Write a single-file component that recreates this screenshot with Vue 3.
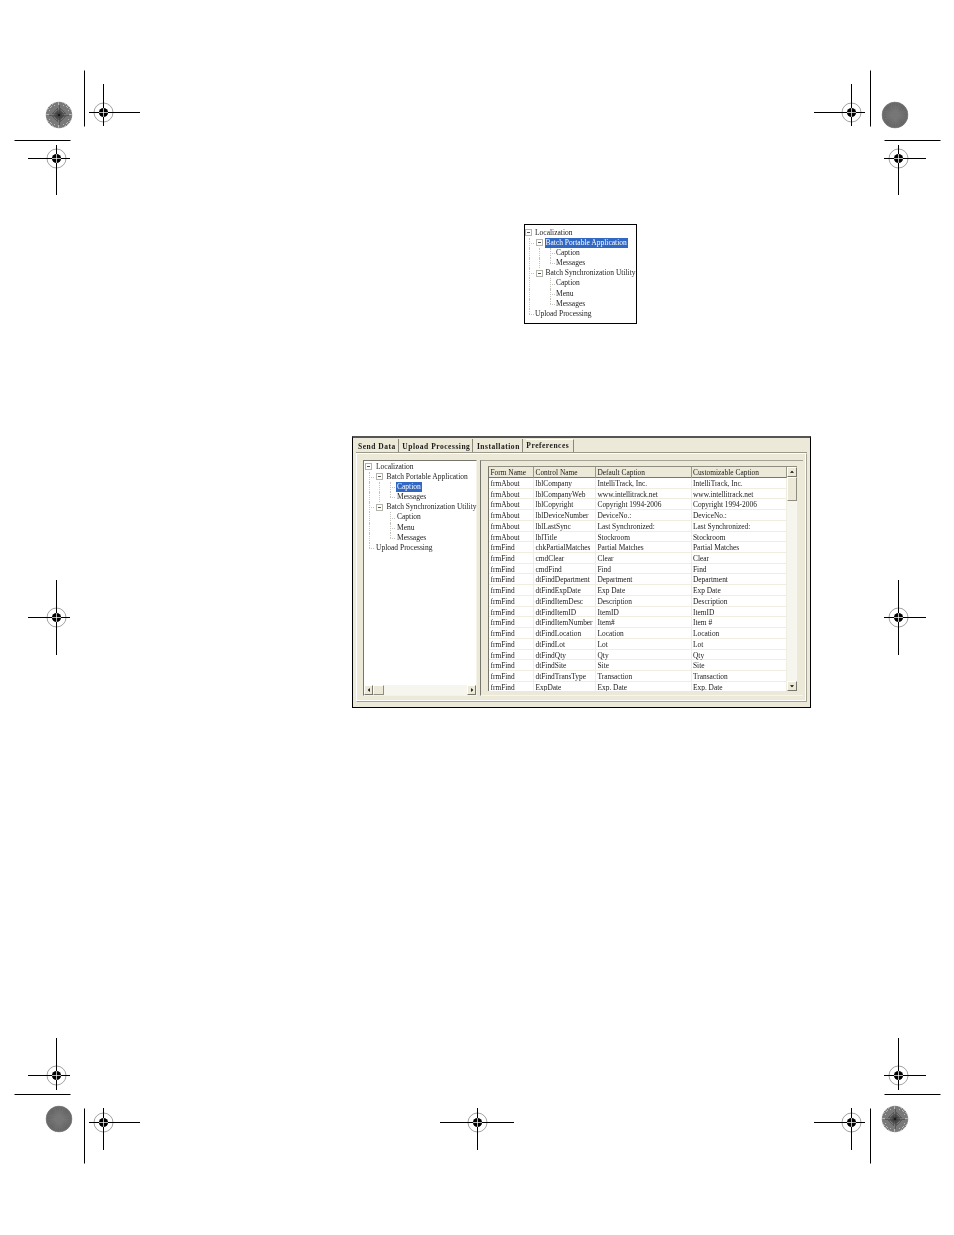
<script setup>
const treeRows = [
  { label: 'Localization', cells: ['box'] },
  { label: 'Batch Portable Application', cells: ['tee', 'box'], selectedIn: 'small' },
  { label: 'Caption', cells: ['v', 'v', 'tee'], selectedIn: 'large' },
  { label: 'Messages', cells: ['v', 'v', 'elbow'] },
  { label: 'Batch Synchronization Utility', cells: ['tee', 'box'] },
  { label: 'Caption', cells: ['v', 'blank', 'tee'] },
  { label: 'Menu', cells: ['v', 'blank', 'tee'] },
  { label: 'Messages', cells: ['v', 'blank', 'elbow'] },
  { label: 'Upload Processing', cells: ['elbow'] }
]

const tabs = [
  { label: 'Send Data' },
  { label: 'Upload Processing' },
  { label: 'Installation' },
  { label: 'Preferences', active: true }
]

const columns = ['Form Name', 'Control Name', 'Default Caption', 'Customizable Caption']

const rows = [
  ['frmAbout', 'lblCompany', 'IntelliTrack, Inc.', 'IntelliTrack, Inc.'],
  ['frmAbout', 'lblCompanyWeb', 'www.intellitrack.net', 'www.intellitrack.net'],
  ['frmAbout', 'lblCopyright', 'Copyright 1994-2006', 'Copyright 1994-2006'],
  ['frmAbout', 'lblDeviceNumber', 'DeviceNo.:', 'DeviceNo.:'],
  ['frmAbout', 'lblLastSync', 'Last Synchronized:', 'Last Synchronized:'],
  ['frmAbout', 'lblTitle', 'Stockroom', 'Stockroom'],
  ['frmFind', 'chkPartialMatches', 'Partial Matches', 'Partial Matches'],
  ['frmFind', 'cmdClear', 'Clear', 'Clear'],
  ['frmFind', 'cmdFind', 'Find', 'Find'],
  ['frmFind', 'dtFindDepartment', 'Department', 'Department'],
  ['frmFind', 'dtFindExpDate', 'Exp Date', 'Exp Date'],
  ['frmFind', 'dtFindItemDesc', 'Description', 'Description'],
  ['frmFind', 'dtFindItemID', 'ItemID', 'ItemID'],
  ['frmFind', 'dtFindItemNumber', 'Item#', 'Item #'],
  ['frmFind', 'dtFindLocation', 'Location', 'Location'],
  ['frmFind', 'dtFindLot', 'Lot', 'Lot'],
  ['frmFind', 'dtFindQty', 'Qty', 'Qty'],
  ['frmFind', 'dtFindSite', 'Site', 'Site'],
  ['frmFind', 'dtFindTransType', 'Transaction', 'Transaction'],
  ['frmFind', 'ExpDate', 'Exp. Date', 'Exp. Date']
]

// registration targets: centre plus the reach of each arm
const targets = [
  { x: 103, y: 112, l: 14, r: 37, t: 28, b: 14 },
  { x: 851, y: 112, l: 37, r: 14, t: 28, b: 14 },
  { x: 56, y: 158, l: 28, r: 14, t: 13, b: 37 },
  { x: 898, y: 158, l: 14, r: 28, t: 13, b: 37 },
  { x: 56, y: 617, l: 28, r: 14, t: 37, b: 38 },
  { x: 898, y: 617, l: 14, r: 28, t: 37, b: 38 },
  { x: 56, y: 1075, l: 28, r: 14, t: 37, b: 15 },
  { x: 898, y: 1075, l: 14, r: 28, t: 37, b: 15 },
  { x: 103, y: 1122, l: 14, r: 37, t: 14, b: 28 },
  { x: 477, y: 1122, l: 37, r: 37, t: 14, b: 28 },
  { x: 851, y: 1122, l: 37, r: 14, t: 14, b: 28 }
]

const cropLines = [
  [84, 70, 84, 126],
  [870, 70, 870, 126],
  [14, 140, 70, 140],
  [884, 140, 940, 140],
  [14, 1094, 70, 1094],
  [884, 1094, 940, 1094],
  [84, 1108, 84, 1163],
  [870, 1108, 870, 1163]
]

function rayPath(cx, cy, radius, count) {
  let d = ''
  for (let i = 0; i < count; i++) {
    const a = (i / count) * Math.PI * 2
    const x = (cx + Math.cos(a) * radius).toFixed(2)
    const y = (cy + Math.sin(a) * radius).toFixed(2)
    d += `M${cx} ${cy}L${x} ${y}`
  }
  return d
}

const bursts = [
  { x: 59, y: 115, rays: rayPath(59, 115, 13, 64), kind: 'open' },
  { x: 895, y: 1119, rays: rayPath(895, 1119, 13, 64), kind: 'open' },
  { x: 895, y: 115, rays: rayPath(895, 115, 13, 180), kind: 'dense' },
  { x: 59, y: 1119, rays: rayPath(59, 1119, 13, 180), kind: 'dense' }
]
</script>

<template>
  <div class="page">
    <svg class="marks" width="954" height="1235" viewBox="0 0 954 1235">
      <g v-for="(b, i) in bursts" :key="'b' + i">
        <circle :cx="b.x" :cy="b.y" r="13" :class="b.kind === 'open' ? 'disc-open' : 'disc-dense'" />
        <path :d="b.rays" :class="b.kind === 'open' ? 'rays-open' : 'rays-dense'" />
        <circle :cx="b.x" :cy="b.y" r="13" class="burst-edge" />
        <circle v-if="b.kind === 'open'" :cx="b.x" :cy="b.y" r="1" class="hub" />
      </g>
      <line v-for="(c, i) in cropLines" :key="'c' + i" :x1="c[0] + 0.5" :y1="c[1] + 0.5" :x2="c[2] + 0.5" :y2="c[3] + 0.5" class="crop" />
      <g v-for="(t, i) in targets" :key="'t' + i">
        <circle :cx="t.x + 0.5" :cy="t.y + 0.5" r="9.5" class="ring" />
        <line :x1="t.x - t.l" :y1="t.y + 0.5" :x2="t.x + t.r" :y2="t.y + 0.5" class="crop" />
        <line :x1="t.x + 0.5" :y1="t.y - t.t" :x2="t.x + 0.5" :y2="t.y + t.b" class="crop" />
        <circle :cx="t.x + 0.5" :cy="t.y + 0.5" r="4.6" class="dot" />
        <line :x1="t.x - 4" :y1="t.y + 0.5" :x2="t.x + 5" :y2="t.y + 0.5" class="knock" />
        <line :x1="t.x + 0.5" :y1="t.y - 4" :x2="t.x + 0.5" :y2="t.y + 5" class="knock" />
      </g>
    </svg>

    <section class="small-tree">
      <div v-for="(row, i) in treeRows" :key="i" class="tree-row">
        <span v-for="(cell, j) in row.cells" :key="j" class="cell" :class="cell"></span>
        <span class="tree-label" :class="{ selected: row.selectedIn === 'small' }">{{ row.label }}</span>
      </div>
    </section>

    <section class="window">
      <div class="tabs">
        <span v-for="tab in tabs" :key="tab.label" class="tab" :class="{ active: tab.active }">{{ tab.label }}</span>
      </div>
      <div class="tab-frame">
        <div class="tree-pane">
          <div class="tree-scroll">
            <div v-for="(row, i) in treeRows" :key="i" class="tree-row">
              <span v-for="(cell, j) in row.cells" :key="j" class="cell" :class="cell"></span>
              <span class="tree-label" :class="{ selected: row.selectedIn === 'large' }">{{ row.label }}</span>
            </div>
          </div>
          <div class="hbar">
            <span class="sb-btn"><i class="arrow left"></i></span>
            <span class="sb-thumb-h"></span>
            <span class="sb-track"></span>
            <span class="sb-btn"><i class="arrow right"></i></span>
          </div>
        </div>
        <div class="grid-pane">
          <div class="grid">
            <div class="grid-body">
              <div class="grid-row head">
                <span v-for="c in columns" :key="c" class="grid-cell">{{ c }}</span>
              </div>
              <div v-for="(r, i) in rows" :key="i" class="grid-row">
                <span v-for="(c, j) in r" :key="j" class="grid-cell">{{ c }}</span>
              </div>
            </div>
            <div class="vbar">
              <span class="sb-btn tall"><i class="arrow up"></i></span>
              <span class="sb-thumb-v"></span>
              <span class="sb-track"></span>
              <span class="sb-btn tall"><i class="arrow down"></i></span>
            </div>
          </div>
        </div>
      </div>
    </section>
  </div>
</template>

<style scoped>
.page {
  position: relative;
  width: 954px;
  height: 1235px;
  background: #fff;
  overflow: hidden;
  padding-top: 224px;
  box-sizing: border-box;
  font-family: "Liberation Serif", serif;
  font-size: 7.4px;
  color: #1a1a1a;
}
.marks {
  position: absolute;
  left: 0;
  top: 0;
}
.crop {
  stroke: #000;
  stroke-width: 1;
}
.knock {
  stroke: #fff;
  stroke-width: 0.7;
}
.ring {
  fill: #fff;
  stroke: #8a8a8a;
  stroke-width: 0.8;
}
.dot {
  fill: #000;
}
.disc-open {
  fill: #b8b8b8;
}
.disc-dense {
  fill: #4c4c4c;
}
.rays-open {
  stroke: #3a3a3a;
  stroke-width: 0.5;
  fill: none;
  shape-rendering: crispEdges;
}
.rays-dense {
  stroke: #787878;
  stroke-width: 0.4;
  fill: none;
  shape-rendering: crispEdges;
}
.burst-edge {
  fill: none;
  stroke: #8a8a8a;
  stroke-width: 0.5;
}
.hub {
  fill: #111;
}

.small-tree {
  position: relative;
  width: 113px;
  height: 100px;
  margin-left: 524px;
  border: 1px solid #000;
  box-sizing: border-box;
  padding-top: 2.5px;
  background: #fff;
  filter: blur(0.3px);
}
.tree-row {
  display: flex;
  align-items: center;
  height: 10.2px;
  line-height: 10.2px;
  white-space: nowrap;
}
.cell {
  position: relative;
  flex: none;
  width: 10.5px;
  height: 100%;
}
.cell.v::before,
.cell.tee::before,
.cell.elbow::before {
  content: "";
  position: absolute;
  left: 3.5px;
  top: 0;
  bottom: 0;
  border-left: 1px dotted #c4c4be;
}
.cell.elbow::before {
  bottom: 50%;
}
.cell.tee::after,
.cell.elbow::after {
  content: "";
  position: absolute;
  left: 4px;
  width: 5px;
  top: 50%;
  border-top: 1px dotted #c4c4be;
}
.cell.box::before {
  content: "";
  position: absolute;
  left: 0;
  top: 1.6px;
  width: 7px;
  height: 7px;
  box-sizing: border-box;
  border: 1px solid #b4b4ac;
  background: #fff;
}
.cell.box::after {
  content: "";
  position: absolute;
  left: 2px;
  top: 4.6px;
  width: 3px;
  height: 1px;
  background: #555;
}
.tree-label {
  font-size: 7.5px;
  margin-left: -1.5px;
  padding: 0 1px;
}
.tree-scroll .tree-label {
  margin-left: -0.5px;
}
.tree-label.selected {
  background: #3168c4;
  color: #fff;
}

.window {
  position: relative;
  width: 459px;
  height: 272px;
  margin: 112px 0 0 352px;
  box-sizing: border-box;
  border: 1px solid #000;
  border-top: 2px solid #555;
  background: #ece9d8;
  display: flex;
  flex-direction: column;
  padding: 1px 3px 5px 3px;
  filter: blur(0.3px);
}
.tabs {
  display: flex;
  height: 14px;
  flex: none;
  padding-left: 2px;
}
.tab {
  font-weight: bold;
  font-size: 7.5px;
  line-height: 15px;
  padding: 0 2px 0 0;
  border-right: 1px solid #8a887a;
  margin-right: 3.5px;
  letter-spacing: 0.52px;
}
.tab.active {
  line-height: 12px;
  padding: 0 4px 0 0;
  background: #ece9d8;
  border-top: 1px solid #fff;
}
.tab-frame {
  flex: 1;
  min-height: 0;
  display: flex;
  gap: 3px;
  border: 1px solid #a5a396;
  border-top-color: #fff;
  border-left-color: #fff;
  box-shadow: inset -1px -1px 0 #fff, 0 -1px 0 #9a9888;
  padding: 6px 3px 5px 6px;
}
.tree-pane {
  width: 114px;
  flex: none;
  display: flex;
  flex-direction: column;
  background: #fff;
  box-sizing: border-box;
  border: 1px solid #77766c;
  border-right-color: #f4f3ea;
  border-bottom-color: #f4f3ea;
}
.tree-scroll {
  flex: 1;
  padding-left: 1px;
  min-height: 0;
  padding-top: 0.5px;
}
.hbar {
  display: flex;
  height: 10px;
  flex: none;
}
.sb-btn {
  position: relative;
  flex: none;
  width: 9px;
  height: 100%;
  box-sizing: border-box;
  background: #ece9d8;
  border: 1px solid;
  border-color: #fff #77766c #77766c #fff;
}
.sb-btn.tall {
  width: 100%;
  height: 10px;
}
.sb-thumb-h {
  flex: none;
  width: 11px;
  box-sizing: border-box;
  background: #ece9d8;
  border: 1px solid;
  border-color: #fff #8f8d80 #8f8d80 #fff;
}
.sb-thumb-v {
  flex: none;
  height: 24px;
  box-sizing: border-box;
  background: #ece9d8;
  border: 1px solid;
  border-color: #fff #8f8d80 #8f8d80 #fff;
}
.sb-track {
  flex: 1;
  background-color: #f7f6ee;
  background-image: radial-gradient(#dcdccf 0.5px, transparent 0.6px);
  background-size: 4px 4px;
}
.arrow {
  position: absolute;
  left: 50%;
  top: 50%;
  width: 0;
  height: 0;
  border: 2.5px solid transparent;
}
.arrow.left {
  border-right-color: #000;
  transform: translate(-80%, -50%);
}
.arrow.right {
  border-left-color: #000;
  transform: translate(-20%, -50%);
}
.arrow.up {
  border-bottom-color: #000;
  transform: translate(-50%, -80%);
}
.arrow.down {
  border-top-color: #000;
  transform: translate(-50%, -20%);
}
.grid-pane {
  flex: 1;
  min-width: 0;
  box-sizing: border-box;
  border-left: 1px solid #77766c;
  border-top: 1px solid #a5a396;
  border-bottom: 1px solid #f7f6ee;
  padding: 5px 6px 4px 7px;
}
.grid {
  display: flex;
  height: 100%;
  overflow: hidden;
  border-top: 1px solid #8f8d80;
  border-left: 1px solid #77766c;
  box-sizing: border-box;
  width: 309px;
}
.grid-body {
  flex: none;
  width: 298px;
  background: #fff;
}
.grid-row {
  display: grid;
  grid-template-columns: 45px 62px 95.5px 95.5px;
  height: 10.72px;
  line-height: 12.6px;
  box-sizing: border-box;
  border-bottom: 1px solid #f0eee0;
}
.grid-row.head {
  height: 11px;
  line-height: 11.6px;
  background: #ece9d8;
  border-bottom: 1px solid #77766c;
}
.grid-cell {
  padding-left: 1.5px;
  border-right: 1px solid #f0eee0;
  white-space: nowrap;
}
.head .grid-cell {
  border-right-color: #9a9888;
}
.vbar {
  flex: none;
  width: 10px;
  display: flex;
  flex-direction: column;
}
</style>

<style>
html, body {
  background: #fff;
}
</style>
